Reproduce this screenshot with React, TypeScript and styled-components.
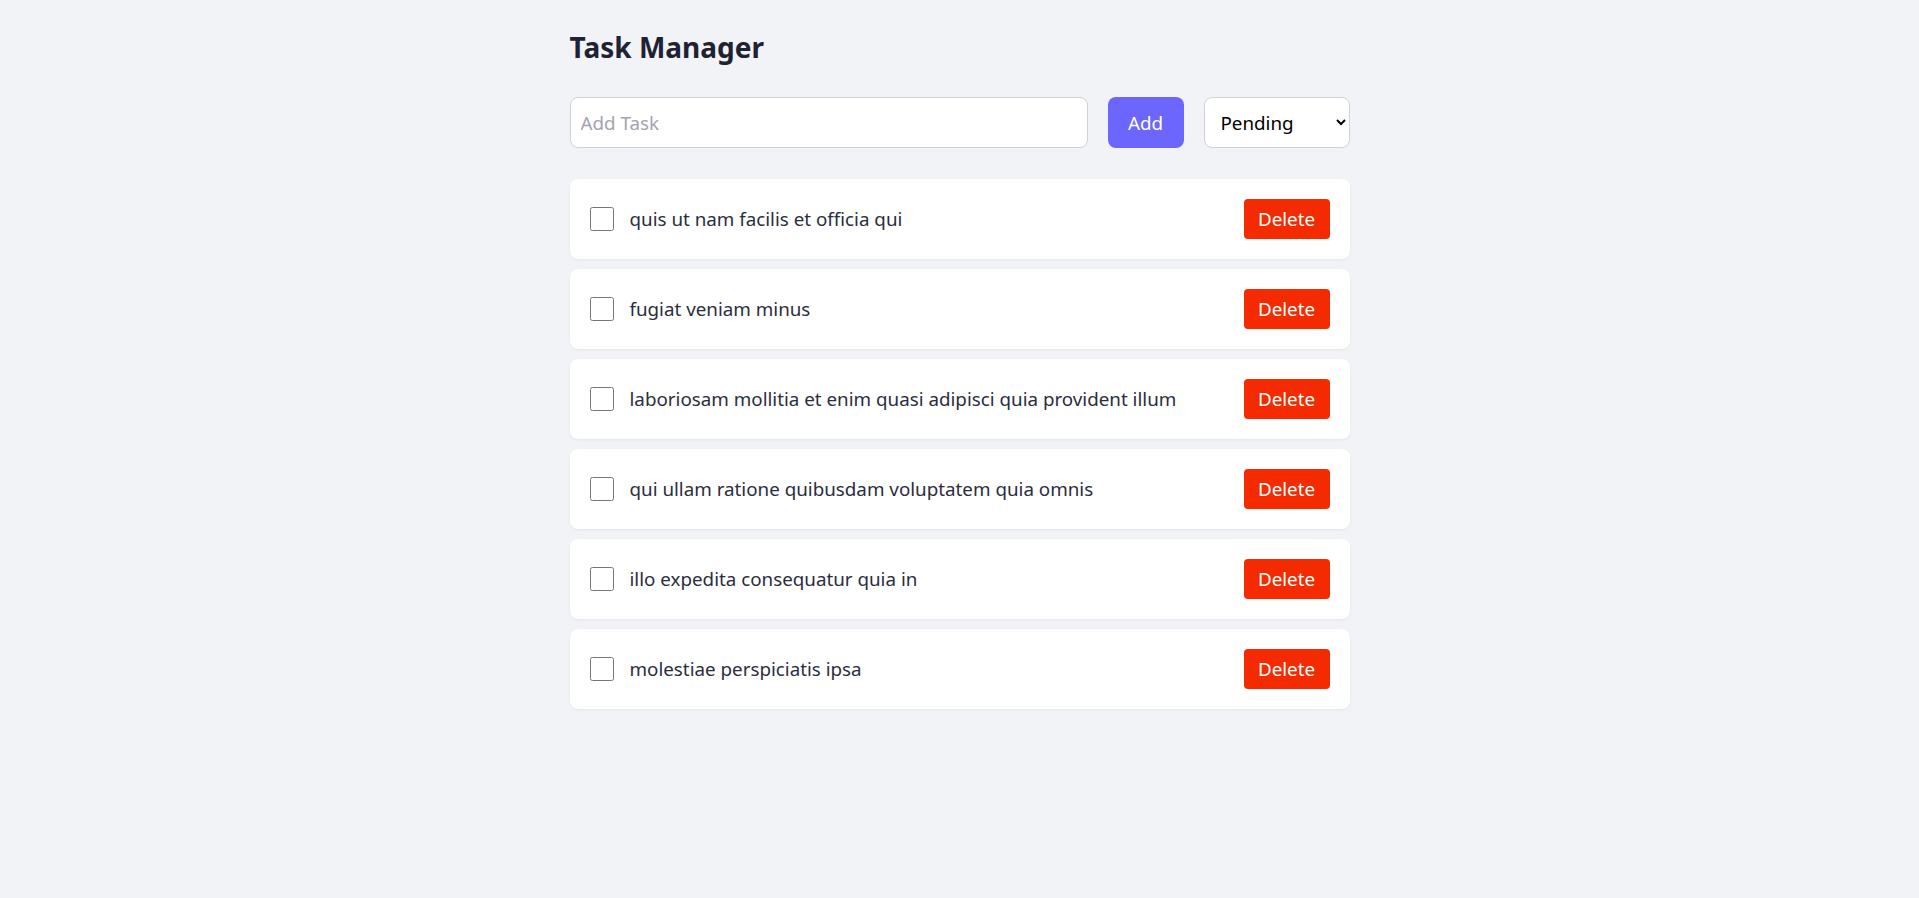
import React, { useState } from "react";
import styled, { createGlobalStyle } from "styled-components";

const GlobalStyle = createGlobalStyle`
  html, body {
    margin: 0;
    padding: 0;
    background: #f2f3f7;
    font-family: "Noto Sans", "Open Sans", Arial, sans-serif;
  }
  * { box-sizing: border-box; }
`;

const Page = styled.div`
  width: 780px;
  margin: 0 auto;
  padding: 29px 0 40px;
`;

const Title = styled.h1`
  margin: 0 0 32px;
  font-size: 28px;
  line-height: 36px;
  font-weight: 700;
  color: #1f2233;
`;

const Toolbar = styled.div`
  display: flex;
  align-items: stretch;
  gap: 20px;
  height: 51px;
  margin-bottom: 31px;
`;

const TaskInput = styled.input`
  flex: 1;
  height: 100%;
  padding: 0 10px;
  border: 1px solid #d0d2db;
  border-radius: 8px;
  background: #fff;
  font-family: inherit;
  font-size: 18.8px;
  color: #2a2d3e;
  outline: none;
  &::placeholder {
    color: #a3a3b3;
  }
`;

const AddButton = styled.button`
  width: 76px;
  height: 100%;
  border: none;
  border-radius: 8px;
  background: #6c66ff;
  color: #fff;
  font-family: inherit;
  font-size: 18.8px;
  cursor: pointer;
`;

const StatusSelect = styled.select`
  width: 146px;
  height: 100%;
  padding: 0 8px 0 12px;
  border: 1px solid #d0d2db;
  border-radius: 8px;
  background: #fff;
  color: #000;
  font-family: inherit;
  font-size: 18.8px;
`;

const List = styled.div`
  display: flex;
  flex-direction: column;
  gap: 10px;
`;

const Card = styled.div`
  display: flex;
  align-items: center;
  gap: 16px;
  height: 80px;
  padding: 0 20px;
  background: #fff;
  border-radius: 8px;
  box-shadow: 0 1px 3px rgba(0, 0, 0, 0.06);
`;

const Check = styled.input`
  width: 24px;
  height: 24px;
  margin: 0;
  flex: none;
`;

const TaskText = styled.span<{ $done: boolean }>`
  flex: 1;
  font-size: 18.8px;
  color: #2a2d3e;
  text-decoration: ${(p) => (p.$done ? "line-through" : "none")};
`;

const DeleteButton = styled.button`
  width: 86px;
  height: 40px;
  border: none;
  border-radius: 4px;
  background: #f42b00;
  color: #fff;
  font-family: inherit;
  font-size: 18.8px;
  cursor: pointer;
`;

const initial = [
  "quis ut nam facilis et officia qui",
  "fugiat veniam minus",
  "laboriosam mollitia et enim quasi adipisci quia provident illum",
  "qui ullam ratione quibusdam voluptatem quia omnis",
  "illo expedita consequatur quia in",
  "molestiae perspiciatis ipsa",
];

export default function App() {
  const [tasks, setTasks] = useState(
    initial.map((t, i) => ({ id: i, title: t, done: false }))
  );
  const [text, setText] = useState("");

  return (
    <>
      <GlobalStyle />
      <Page>
        <Title>Task Manager</Title>
        <Toolbar>
          <TaskInput
            placeholder="Add Task"
            value={text}
            onChange={(e) => setText(e.target.value)}
          />
          <AddButton
            onClick={() => {
              if (!text.trim()) return;
              setTasks([...tasks, { id: Date.now(), title: text, done: false }]);
              setText("");
            }}
          >
            Add
          </AddButton>
          <StatusSelect defaultValue="pending">
            <option value="all">All</option>
            <option value="pending">Pending</option>
            <option value="completed">Completed</option>
          </StatusSelect>
        </Toolbar>
        <List>
          {tasks.map((t) => (
            <Card key={t.id}>
              <Check
                type="checkbox"
                checked={t.done}
                onChange={() =>
                  setTasks(tasks.map((x) => (x.id === t.id ? { ...x, done: !x.done } : x)))
                }
              />
              <TaskText $done={t.done}>{t.title}</TaskText>
              <DeleteButton onClick={() => setTasks(tasks.filter((x) => x.id !== t.id))}>
                Delete
              </DeleteButton>
            </Card>
          ))}
        </List>
      </Page>
    </>
  );
}
